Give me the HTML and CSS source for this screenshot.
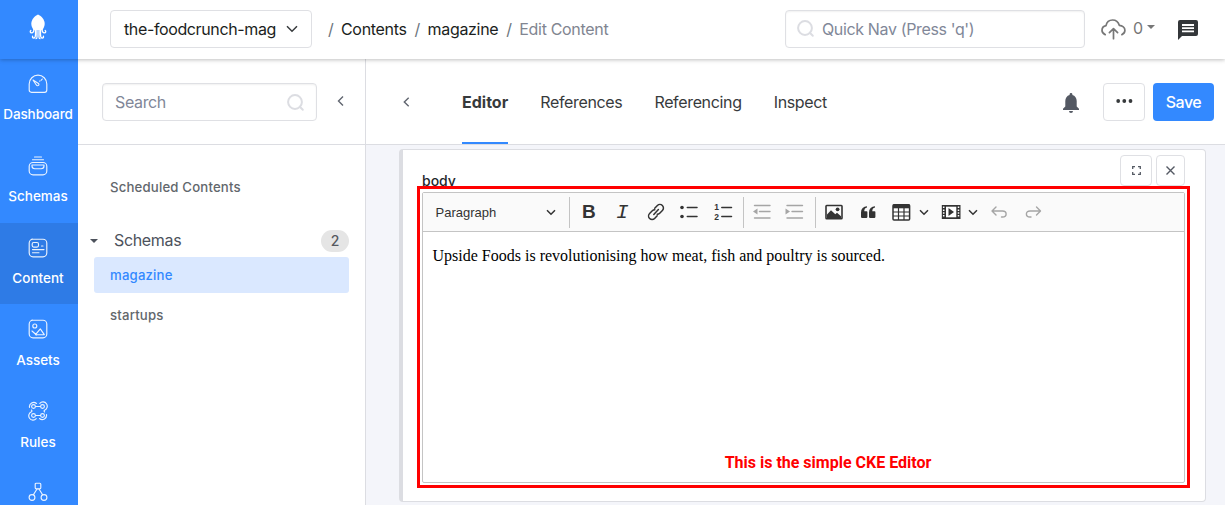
FILE: index.html
```html
<!DOCTYPE html>
<html lang="en">
<head>
<meta charset="utf-8">
<title>Edit Content</title>
<link rel="stylesheet" href="styles.css">
</head>
<body>
<div class="app">
  <header class="topbar">
    <div class="logo">
      <svg width="18" height="26" viewBox="0 0 18 26" fill="none" stroke="#fff" stroke-width="1.3" stroke-linecap="round"><path fill="#fff" stroke="none" d="M9 .5C5.400 2 2.300 6 2.300 9.700c0 2.600 1.200 4.600 2.400 6.300h8.600c1.200-1.700 2.400-3.700 2.400-6.300C15.700 6 12.600 2 9 .5z"/><path d="M5 14.500c0 3-1 4.300-2.400 4.300S.8 17.300 1.800 16.500M13 14.500c0 3 1 4.300 2.400 4.300s1.800-1.500.8-2.300M6.500 15v5.500c0 2-.6 3.500-1.800 3.500s-1.500-1-1-1.800M11.500 15v5.500c0 2 .6 3.500 1.800 3.500s1.500-1 1-1.800M8 15v8c0 1.300-.4 1.700-1 1.700M10 15v8c0 1.300.4 1.700 1 1.700"/></svg>
    </div>
    <button class="app-select"><span>the-foodcrunch-mag</span>
      <svg width="12" height="8" viewBox="0 0 12 8" fill="none" stroke="#373a3c" stroke-width="1.500"><path d="M1 1.200l5 5 5-5"/></svg>
    </button>
    <nav class="crumbs"><i>/</i><span class="c1">Contents</span><i>/</i><span class="c2">magazine</span><i>/</i><span class="c3">Edit Content</span></nav>
    <div class="field quick">
      <svg width="18" height="18" viewBox="0 0 18 18" fill="none" stroke="#dcdde2" stroke-width="2"><circle cx="8" cy="8" r="6.900"/><path d="M12.800 12.800l3 3" stroke-linecap="round"/></svg>
      <span>Quick Nav (Press 'q')</span>
    </div>
    <div class="uploads">
      <svg width="25" height="21" viewBox="0 0 25 21" fill="none" stroke="#777" stroke-width="1.700" stroke-linecap="round" stroke-linejoin="round"><path d="M4.200 15.600C2.300 14.800 1 13.400 1 11.300c0-2.500 1.700-4.100 4-4.600C5.700 3.200 8.300 1 11.600 1c3.400 0 5.700 2 6.700 5.300 3.100.2 5.600 2.100 5.600 5 0 2-1.200 3.600-3 4.300M12.500 19.700V10M8.400 13.600l4.100-4 4.100 4"/></svg>
      <span>0</span><b class="caret"></b>
    </div>
    <svg class="chat" width="20" height="20" viewBox="0 0 20 20"><path fill="#333639" d="M2 0h16a2 2 0 0 1 2 2v12a2 2 0 0 1-2 2H4l-4 4V2a2 2 0 0 1 2-2z"/><path stroke="#fff" stroke-width="1.800" d="M4 5h12M4 8.200h12M4 11.400h12"/></svg>
  </header>

  <div class="body">
    <nav class="side">
      <a><svg width="20" height="20" viewBox="0 0 20 20"><path d="M3.500 18.300C2 18.300 1.200 17.400 1.200 16v-6a8.800 8.800 0 0 1 17.600 0v6c0 1.400-.8 2.300-2.300 2.300zM5 6l3.500 5.200c.5.700 1.400.7 2 .2s.6-1.300 0-1.900zM13.300 6.200l1-1.200M11.700 7.200l.3-.3"/></svg><span class="n1">Dashboard</span></a>
      <a><svg width="20" height="20" viewBox="0 0 20 20"><rect x="1.200" y="6.500" width="17.600" height="12.300" rx="3.800"/><path d="M6.500 1h7M4.500 3.700h11M4 9h12v1c0 1.500-1.200 2.700-2.800 2.700H6.800C5.200 12.700 4 11.500 4 10z"/></svg><span>Schemas</span></a>
      <a class="on"><svg width="20" height="20" viewBox="0 0 20 20"><rect x="1.200" y="1.200" width="17.600" height="17.600" rx="3.800"/><rect x="4.200" y="4.500" width="6.300" height="4.600" rx="1.500"/><path d="M13.500 8h1.500M4.500 11.600h11.500M4.500 14.700h6.500"/></svg><span>Content</span></a>
      <a><svg width="20" height="20" viewBox="0 0 20 20"><rect x="1.200" y="1.200" width="17.600" height="17.600" rx="3.800"/><circle cx="6.800" cy="7" r="2"/><path d="M4 12l4.500 4M7.500 15.700l4.800-5.800 4 5.800z"/></svg><span>Assets</span></a>
      <a><svg width="20" height="20" viewBox="0 0 20 20"><circle cx="5.500" cy="5.500" r="1.900"/><circle cx="14.500" cy="5.500" r="1.900"/><circle cx="5.500" cy="14.500" r="1.900"/><circle cx="14.500" cy="14.500" r="1.900"/><path d="M1.500 6.500a4.300 4.300 0 0 1 7-4M7.500 5.500h5M11.800 2.300a4.300 4.300 0 1 1 4.800 6.900c-.7.500-.7 1.200 0 1.800M18.500 13.500a4.300 4.300 0 0 1-7 4M12.500 14.500h-5M8.200 17.700a4.300 4.300 0 1 1-4.800-6.900c.7-.5.700-1.200 0-1.800"/></svg><span>Rules</span></a>
      <a><svg width="20" height="20" viewBox="0 0 20 20"><rect x="7.200" y="1.200" width="5.600" height="5.600" rx="1"/><circle cx="4" cy="15.500" r="2.900"/><circle cx="16" cy="15.500" r="2.900"/><path d="M9 7l-3.600 5.800M11 7l3.600 5.800"/></svg></a>
    </nav>

    <aside class="panel">
      <div class="head">
        <div class="field search"><span>Search</span>
          <svg width="18" height="18" viewBox="0 0 18 18" fill="none" stroke="#dcdde2" stroke-width="2"><circle cx="8" cy="8" r="6.900"/><path d="M12.800 12.800l3 3" stroke-linecap="round"/></svg>
        </div>
        <svg class="fold" width="7" height="12" viewBox="0 0 7 12" fill="none" stroke="#60656f" stroke-width="1.400"><path d="M6 1.500L1.500 6 6 10.500"/></svg>
      </div>
      <div class="tree">
        <div class="link"><span class="t1">Scheduled Contents</span></div>
        <div class="group"><b class="caret"></b><span>Schemas</span><em>2</em></div>
        <div class="link on"><span class="t2">magazine</span></div>
        <div class="link last"><span class="t3">startups</span></div>
      </div>
    </aside>

    <main class="main">
      <div class="head">
        <svg width="7" height="10" viewBox="0 0 7 10" fill="none" stroke="#60656f" stroke-width="1.400"><path d="M5.700 .8L1.300 5l4.400 4.200"/></svg>
        <nav class="tabs"><a class="on"><span>Editor</span></a><a><span>References</span></a><a><span>Referencing</span></a><a><span>Inspect</span></a></nav>
        <svg class="bell" width="16" height="20" viewBox="0 0 16 20" fill="#545963"><path d="M8 0c.8 0 1.400.6 1.400 1.400v.5c2.700.7 4.300 3 4.300 6V13.500L16 15.800V17H0v-1.200l2.300-2.300V7.900c0-3 1.600-5.300 4.300-6v-.5C6.600.6 7.200 0 8 0zM6 18h4a2 2 0 0 1-4 0z"/></svg>
        <button class="more"><svg width="17" height="4" viewBox="0 0 17 4" fill="#373a3c"><circle cx="2.200" cy="2" r="1.900"/><circle cx="8.300" cy="2" r="1.900"/><circle cx="14.500" cy="2" r="1.900"/></svg></button>
        <button class="save">Save</button>
      </div>
      <div class="canvas">
        <section class="card">
          <div class="tools">
            <button class="full"><svg width="9" height="9" viewBox="0 0 9 9" fill="none" stroke="#555a64" stroke-width="1.300"><path d="M.7 3V.7H3M6 .7h2.300V3M8.300 6v2.300H6M3 8.300H.7V6"/></svg></button>
            <button class="x"><svg width="9" height="9" viewBox="0 0 9 9" stroke="#555a64" stroke-width="1.400"><path d="M.5 .5l8 8M8.500 .5l-8 8"/></svg></button>
          </div>
          <label>body</label>
          <div class="editor">
            <div class="bar">
              <div class="para"><span>Paragraph</span><svg class="chev" width="10" height="7" viewBox="0 0 10 7"><path d="M1 1.200l4 4 4-4"/></svg></div>
              <i class="sep"></i>
              <div class="btn bold">B</div>
              <div class="btn ital">I</div>
              <div class="btn"><svg width="20" height="20" viewBox="0 0 20 20" fill="none" stroke="#333" stroke-width="1.500" stroke-linecap="round"><path d="M7.800 12.400l4.600-4.800M8.700 6.200l2.700-2.700a3.500 3.500 0 0 1 5 5l-2.700 2.800c-.7.700-1.500 1-2.500 1M11.200 13.800l-2.600 2.700a3.500 3.500 0 0 1-5-5l2.700-2.800c.7-.7 1.500-1 2.500-1"/></svg></div>
              <div class="btn"><svg width="20" height="20" viewBox="0 0 20 20"><path stroke="#333" stroke-width="1.500" stroke-linecap="round" d="M8.300 5.500h9.700M8.300 14.500h9.700"/><circle cx="3" cy="5.500" r="1.800" fill="#333"/><circle cx="3" cy="14.500" r="1.800" fill="#333"/></svg></div>
              <div class="btn"><svg width="20" height="20" viewBox="0 0 20 20"><path stroke="#333" stroke-width="1.500" stroke-linecap="round" d="M8.800 5.500h9.700M8.800 14.500h9.700"/><text class="num" x="1.300" y="8.200">1</text><text class="num" x="1.300" y="17.800">2</text></svg></div>
              <i class="sep s2"></i>
              <div class="btn in off"><svg width="20" height="20" viewBox="0 0 20 20"><path d="M2.500 3.500h15.500M7.500 9.500H18M2.500 16h15.500"/><path class="f" d="M5.500 6.500v6L1 9.500z"/></svg></div>
              <div class="btn in off"><svg width="20" height="20" viewBox="0 0 20 20"><path d="M3 3.500h15.500M8 9.500h10.500M3 16h15.500"/><path class="f" d="M1.500 6.500v6L6 9.500z"/></svg></div>
              <i class="sep s3"></i>
              <div class="btn"><svg width="20" height="20" viewBox="0 0 20 20"><rect x="2" y="3.500" width="16" height="13.300" rx=".7" fill="none" stroke="#333" stroke-width="1.600"/><path fill="#333" d="M3 16v-3.500l4-4.300 4.300 4 1.700-1.400 4 3.500V16z"/><circle cx="13.600" cy="7.300" r="1.900" fill="#333"/></svg></div>
              <div class="btn"><svg width="20" height="20" viewBox="0 0 20 20" fill="#333"><path d="M3 10.500a6 6 0 0 1 6-6.300v1.300c-2 .3-2.800 1.800-2.700 3.800h2.300c.5 0 .8.300.8.800v5c0 .5-.3.800-.8.800H3.800c-.5 0-.8-.3-.8-.8zM11 10.500a6 6 0 0 1 6-6.300v1.300c-2 .3-2.800 1.800-2.700 3.800h2.300c.5 0 .8.300.8.800v5c0 .5-.3.800-.8.800h-4.800c-.5 0-.8-.3-.8-.8z"/></svg></div>
              <div class="btn tab"><svg width="20" height="20" viewBox="0 0 20 20"><rect x="2" y="2.800" width="16.600" height="15.200" rx="1" fill="#fff" stroke="#333" stroke-width="1.500"/><path fill="#333" d="M2 2.500h16.600v3.800H2z"/><path stroke="#333" stroke-width="1.200" d="M7.500 6v12M13 6v12M2 10h16.600M2 14h16.600"/></svg></div>
              <svg class="chev" width="10" height="7" viewBox="0 0 10 7"><path d="M1 1.200l4 4 4-4"/></svg>
              <div class="btn media"><svg width="20" height="20" viewBox="0 0 20 20"><path fill="#333" d="M.8 3h18.700v14H.8z"/><path fill="#fff" d="M5 4.700h10.300v10.600H5z"/><path stroke="#fff" stroke-width="1.500" stroke-dasharray="1.500 1.300" d="M2.700 4.600v11M17.500 4.600v11"/><path fill="#333" d="M7.500 6v8l5.500-4z"/></svg></div>
              <svg class="chev" width="10" height="7" viewBox="0 0 10 7"><path d="M1 1.200l4 4 4-4"/></svg>
              <div class="btn un off"><svg width="20" height="20" viewBox="0 0 20 20"><path d="M7 5L3 9l4 4M3.500 9h10c2.200 0 3.600 1.100 3.600 2.900S15.700 15 13.500 15h-1"/></svg></div>
              <div class="btn off"><svg width="20" height="20" viewBox="0 0 20 20"><path d="M13.500 5l4 4-4 4M17 9H7c-2.200 0-3.600 1.100-3.600 2.900S4.800 15 7 15h1"/></svg></div>
            </div>
            <p><span>Upside Foods is revolutionising how meat, fish and poultry is sourced.</span></p>
          </div>
          <div class="mark"><span>This is the simple CKE Editor</span></div>
        </section>
      </div>
    </main>
  </div>
</div>
</body>
</html>
```
FILE: styles.css
```css
* { box-sizing: border-box; }
body { margin: 0; font-family: Inter, "Liberation Sans", sans-serif; font-size: 16px; color: #373a3c; background: #fff; }
button { font: inherit; background: #fff; border: 1px solid #dfe0e4; border-radius: 4px; padding: 0; display: flex; align-items: center; justify-content: center; }
svg { display: block; flex: none; }
span { white-space: nowrap; }
.app { width: 1225px; height: 505px; overflow: hidden; display: flex; flex-direction: column; }

.topbar { height: 59px; flex: none; display: flex; align-items: center; padding-bottom: 1px; position: relative; box-shadow: 0 1px 4px rgba(0, 0, 0, .25); z-index: 2; }
.logo { width: 78px; height: 59px; margin-bottom: -1px; background: #3389ff; display: flex; justify-content: center; padding: 14px 2px 0 0; }
.app-select { width: 202px; height: 38px; margin-left: 32px; gap: 10px; color: #1b1e21; letter-spacing: -.37px; }
.crumbs { display: flex; margin-left: 16px; letter-spacing: -.32px; color: #1b1e21; }
.crumbs i { width: 13px; font-style: normal; color: #6c757d; }
.crumbs span { margin-right: 8px; }
.crumbs .c3 { color: #818591; margin: 0; }
.field { display: flex; align-items: center; height: 38px; border: 1px solid #dfe0e4; border-radius: 4px; color: #818798; box-shadow: inset 0 1px 2px rgba(0, 0, 0, .06); letter-spacing: -.36px; }
.quick { width: 300px; margin-left: auto; padding-left: 11px; gap: 7px; }
.uploads { display: flex; align-items: center; margin-left: 16px; color: #777; width: 55px; }
.uploads span { margin: -2px 4px 0 7px; }
.caret { width: 0; height: 0; border: 4.500px solid transparent; border-top-color: currentColor; border-bottom: 0; }
.uploads .caret { flex: none; margin-top: -5px; }
.chat { margin: 2px 27px 0 22px; }

.body { flex: 1; display: flex; min-height: 0; }
.side { width: 78px; background: #3389ff; flex: none; }
.side a { height: 81.800px; display: flex; flex-direction: column; align-items: center; padding: 15px 2px 0 0; gap: 12px; color: #fff; font-size: 13.500px; font-weight: 500; line-height: 17px; }
.side a:nth-child(n+4) { gap: 13px; padding-top: 14.500px; }
.side .n1 { letter-spacing: -.1px; }
.side svg { fill: none; stroke: #fff; stroke-width: 1.150; stroke-linecap: round; stroke-linejoin: round; opacity: .9; }
.side .on { background: #2e7be6; }

.panel { width: 288px; flex: none; border-right: 1px solid #dcdde2; }
.head { height: 86px; border-bottom: 1px solid #dcdde2; display: flex; align-items: center; }
.panel .head { padding-left: 24px; gap: 20px; }
.fold { margin-top: -2px; }
.search { width: 215px; justify-content: space-between; padding: 0 11px 0 12px; }
.search svg { margin-top: 3px; }
.tree { padding: 24px 16px 0; color: #62676c; }
.link { height: 36px; border-radius: 3px; padding-left: 16px; display: flex; align-items: center; font-size: 13.200px; font-weight: 500; letter-spacing: .17px; }
.link.on { background: #dae8ff; color: #3389ff; }
.link.last { margin-top: 4px; }
.group { display: flex; align-items: center; height: 22px; margin: 25px 0 5px -4px; color: #4d525c; letter-spacing: -.34px; }
.group span { margin: -2px 0 0 16px; }
.group em { margin-left: auto; width: 28px; height: 22px; border-radius: 11px; background: #e5e5e5; font: 500 14px/22px Inter, sans-serif; text-align: center; color: #55585e; }

.main { flex: 1; display: flex; flex-direction: column; min-width: 0; }
.main .head { padding: 0 11px 0 37px; flex: none; }
.tabs { display: flex; gap: 32px; margin-left: 52px; height: 85px; letter-spacing: -.34px; }
.tabs a { line-height: 86px; }
.tabs .on { font-weight: 700; letter-spacing: 0; border-bottom: 2px solid #3389ff; }
.bell { margin: 2px 0 0 auto; }
.more { width: 42px; height: 38px; margin-left: 24px; }
.more svg { margin-top: -2px; }
.save { width: 61px; height: 38px; margin-left: 8px; background: #3389ff; border: 0; color: #fff; font-weight: 500; letter-spacing: -.5px; }
.canvas { background: #f4f5fa; flex: 1; padding: 4px 19px 3px 33px; }
.card { position: relative; height: 353px; background: #fff; border: 1px solid #dcdde2; border-left-width: 4px; border-radius: 4px; padding: 21px 20px 0 19px; }
.card label { display: block; height: 21px; line-height: 20px; font-size: 14px; font-weight: 500; color: #25282b; }
.tools { position: absolute; right: 20px; top: 5px; display: flex; gap: 4px; }
.full { width: 32px; height: 31px; }
.x { width: 29px; height: 31px; }
.editor { height: 291px; border: 1px solid #c4c4c4; border-radius: 2px; }
.bar { height: 39px; background: #fafafa; border-bottom: 1px solid #c4c4c4; display: flex; align-items: center; }
.para { width: 146px; display: flex; align-items: center; justify-content: space-between; padding: 0 13px 0 12.500px; font: 13px "Liberation Sans", sans-serif; color: #333; }
.chev { fill: none; stroke: #333; stroke-width: 1.500; margin-top: 1px; }
.sep { width: 1px; height: 31px; background: #c4c4c4; margin-right: 2px; flex: none; }
.s2 { margin-left: 3px; }
.s3 { margin-left: 4px; }
.btn { width: 33.500px; height: 38px; display: flex; align-items: center; justify-content: center; flex: none; color: #333; }
.bold { font: 700 19px "Liberation Sans", sans-serif; }
.ital { font: italic 21px "Liberation Mono", monospace; }
.num { font: 700 8.500px "Liberation Sans", sans-serif; fill: #333; }
.in { width: 32.500px; }
.tab { width: 33px; margin-right: 1px; }
.media { margin-left: 6px; width: 32px; margin-right: 1px; }
.un { margin-left: 5px; }
.off svg { fill: none; stroke: #a5a5a5; stroke-width: 1.400; stroke-linecap: round; stroke-linejoin: round; }
.off .f { fill: #a5a5a5; stroke: none; }
.editor p { margin: 14px 9.500px; font: 16px/20px "Liberation Serif", serif; color: #000; }
.mark { position: absolute; left: 14px; top: 36px; width: 773px; height: 302px; border: 3px solid #f00; outline: 1px solid rgba(255, 0, 0, .25); outline-offset: -1px; display: flex; justify-content: center; align-items: flex-end; padding: 0 0 12px; color: #f00; font: 700 16px/20px Roboto, sans-serif; }
.mark span { margin-left: 49px; }
```
